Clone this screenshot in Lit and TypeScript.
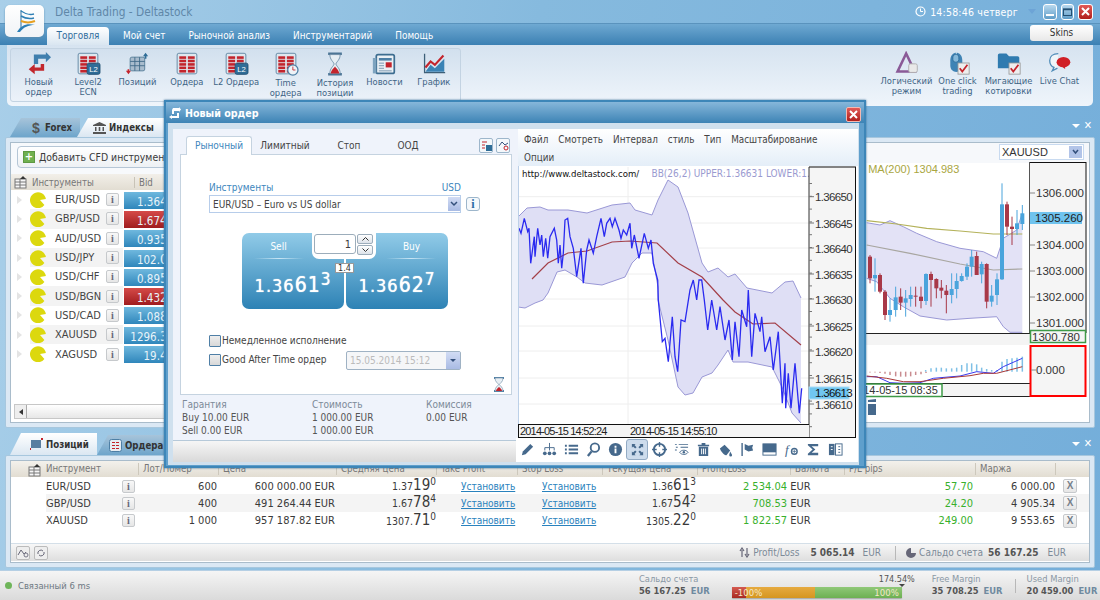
import { LitElement, html, css, svg } from 'lit';
import { customElement } from 'lit/decorators.js';

const z = (s: string, ox: number, oy: number) =>
  s.trim().split(/\s+/).map((p) => {
    const [x, y] = p.split(',').map(Number);
    return `${(ox + x / 3).toFixed(1)},${(oy + y / 3).toFixed(1)}`;
  }).join(' ');

/* dialog chart data */
const upper1 = '518,217 527,208 540,207 548,210 568,210 587,213 612,205 630,203 635,210 652,215 658,200 668,180 678,187 688,213 702,263 708,272 718,268 728,277 735,274 747,288 772,293 785,282 793,281 801,298';
const lower1 = '801,423 792,413 782,387 772,367 748,362 733,362 728,350 718,365 712,373 702,377 693,393 685,395 678,387 668,340 658,300 658,287 652,253 642,253 632,263 625,277 602,285 585,283 577,277 565,270 557,272 548,293 543,300 535,303 525,308 518,307';
const ma1 = '532,279 548,263 568,253 587,251 612,242 630,241 657,243 678,263 702,277 723,300 735,312 753,324 775,323 801,345';
const blue1 = z('12,325 18,340 28,295 38,335 42,325 47,430 58,350 60,410 68,325 75,375 80,345 85,410 92,355 98,415 105,350 118,325 125,360 130,430 135,375 140,445 145,400 150,300 158,295 165,350 175,385 185,470 198,385 205,490 215,390 222,360 235,400 245,350 258,295 268,350 275,310 285,295 292,320 300,295 312,330 318,355 325,330 335,345 345,310 350,385 358,345 372,415 388,340 400,385 408,360 415,430 428,480 430,540 442,665 450,655 460,725 472,590 480,710 488,755 498,600 510,605 525,510 535,480 545,540 552,480 560,480 568,540 578,630 590,540 605,630 615,560 630,660 642,600 652,720 660,605 672,710 680,570 695,620 700,510 710,710 720,580 735,635 740,590 750,695 765,650 775,750 790,635 802,850 810,730 812,865 820,760 828,865 840,730 853,880 860,805', 515, 120);

/* background chart data */
const candles: [number, number, number, number, number, number][] = [
  [30,435,520,440,505,0],[45,445,545,495,505,1],[60,490,550,495,545,0],[75,540,630,545,615,0],[90,565,635,600,615,1],[107,530,620,562,600,1],[122,535,600,560,578,0],[137,540,620,565,578,1],[152,530,590,555,567,1],[167,530,590,557,560,0],[183,530,595,560,573,0],[198,490,585,492,573,1],[213,485,590,492,510,0],[229,505,565,507,535,0],[244,510,565,533,542,0],[259,525,610,542,555,0],[275,490,580,537,555,1],[290,490,565,513,537,1],[305,490,515,498,513,1],[321,460,510,470,500,1],[335,420,500,440,470,1],[350,425,495,438,495,0],[365,455,520,462,493,1],[380,460,595,462,575,0],[395,525,590,557,575,1],[411,490,585,508,555,1],[426,220,510,283,508,1],[441,275,375,283,350,0],[456,320,405,350,357,0],[471,300,375,340,357,1],[487,285,360,310,342,1],
];
const macdBlue: [number, number][] = [[197,5],[213,10],[229,12],[244,12],[259,10],[275,10],[290,12],[305,20],[321,25],[335,25],[350,22],[365,12],[380,8],[395,5],[411,5],[426,30],[441,38],[456,40],[471,42],[487,45]];
const macdRed: [number, number][] = [[30,5],[45,5],[60,8],[75,12],[90,20],[107,28],[122,30],[137,30],[152,28],[167,20],[183,15],[198,8]];
const cx = (v: number) => 860 + v / 3;
const cy = (v: number) => 110 + v / 3;

/* icons */
const redTable = (extra: unknown = '') => html`<svg class="ico" viewBox="0 0 30 28">
  <rect x="3.5" y="1.5" width="23" height="24" rx="2" fill="#dfe7ee" stroke="#57809e"/>
  ${[5, 9, 13, 17, 21].map((y) => svg`<rect x="6" y="${y}" width="8" height="3" fill="#c3242c"/><rect x="16" y="${y}" width="8" height="3" fill="#c3242c"/>`)}
  ${extra}</svg>`;
const l2 = svg`<rect x="14" y="13" width="15" height="13" rx="2" fill="#2f6d97" stroke="#1d4d70"/><text x="21.5" y="23" font-size="9" fill="#fff" text-anchor="middle" font-family="Liberation Sans">L2</text>`;
const clock = svg`<circle cx="23" cy="21" r="6" fill="#eef3f7" stroke="#4d7fa5" stroke-width="1.5"/><path d="M23 17v4h3" stroke="#c3242c" fill="none"/>`;

const ribbonLeft = [
  { i: html`<svg class="ico" viewBox="0 0 30 28"><path d="M9 3h14V0l6 6-6 6V8h-9v6H9z" fill="#3f7fae"/><path d="M21 14v8H10v4L3 20l7-6v4h7v-4z" fill="#c2272d"/></svg>`, l: ['Новый', 'ордер'] },
  { i: redTable(l2), l: ['Level2', 'ECN'] },
  { i: html`<svg class="ico" viewBox="0 0 30 28"><rect x="7" y="6" width="17" height="16" rx="2" fill="#a9bccd" stroke="#4f7895"/><path d="M7 11h17M7 16h17M12.500 6v16M18 6v16" stroke="#3e6886"/><path d="M25 1l3 4h-6z M24 5h2v3h-2z" fill="#2f6d97"/><path d="M5 26l-3-4h6z M4 20h2v3H4z" fill="#c3242c"/></svg>`, l: ['Позиций'] },
  { i: redTable(), l: ['Ордера'] },
  { i: redTable(l2), l: ['L2 Ордера'] },
  { i: redTable(clock), l: ['Time', 'ордера'], low: true },
  { i: html`<svg class="ico" viewBox="0 0 30 28"><path d="M7 2h16M7 26h16" stroke="#4c7595" stroke-width="3"/><path d="M9 3h12c0 6-4 8-5 11 1 3 5 5 5 11H9c0-6 4-8 5-11-1-3-5-5-5-11z" fill="#e6eef4" stroke="#6b8ba5"/><path d="M10 25c1-5 4-6 5-8 1 2 4 3 5 8z" fill="#c3242c"/></svg>`, l: ['История', 'позиции'], low: true },
  { i: html`<svg class="ico" viewBox="0 0 30 28"><rect x="6" y="3" width="21" height="22" rx="2" fill="#eaf0f5" stroke="#3d6d90" stroke-width="2"/><rect x="2" y="7" width="4" height="18" fill="#7da3bf"/><rect x="9" y="7" width="15" height="3" fill="#4d7fa5"/><rect x="17" y="12" width="7" height="6" fill="#c3242c"/><path d="M9 13h6M9 16h6M9 19h6M9 22h15" stroke="#6d8ea7"/></svg>`, l: ['Новости'] },
  { i: html`<svg class="ico" viewBox="0 0 30 28"><path d="M4 2v22h24" stroke="#3d5f78" stroke-width="1.500" fill="none"/><path d="M5 23l6-8 5 4 11-11v15z" fill="#3b83b5"/><path d="M5 18l6-7 5 4 10-11" stroke="#c3242c" stroke-width="2.500" fill="none"/></svg>`, l: ['График'] },
];
const whiteCheck = svg`<rect x="15" y="14" width="13" height="13" fill="#eee" stroke="#999"/><path d="M17 20l3 4 6-8" stroke="#c3242c" stroke-width="2" fill="none"/>`;
const ribbonRight = [
  { i: html`<svg class="ico" viewBox="0 0 30 28"><path d="M14 3L4 24h20z" fill="none" stroke="#8a5a97" stroke-width="3"/><rect x="17" y="15" width="10" height="10" rx="2" fill="#e9e9e9" stroke="#aaa"/></svg>`, l: ['Логический', 'режим'] },
  { i: html`<svg class="ico" viewBox="0 0 30 28"><path d="M6 11c0-12 14-12 14 0v6c0 10-14 10-14 0z" fill="#3f83b5"/><path d="M13 1v9" stroke="#d5e6f2"/><rect x="9" y="4" width="7" height="9" rx="3" fill="#85b8da" stroke="#2c6b99"/>${whiteCheck}</svg>`, l: ['One click', 'trading'] },
  { i: html`<svg class="ico" viewBox="0 0 30 28"><path d="M2 5a2 2 0 012-2h8l3 3h10a2 2 0 012 2v12H2z" fill="#2f7bb0"/>${whiteCheck}</svg>`, l: ['Мигающие', 'котировки'] },
  { i: html`<svg class="ico" viewBox="0 0 30 28"><path d="M13 3c-6 0-10 3-10 8s2 7 5 8l-2 4 6-3" fill="#f0f5f9" stroke="#4f8cb8" stroke-width="1.500"/><ellipse cx="19" cy="13" rx="8" ry="6" fill="#d01f26"/><path d="M17 18l4 3v-3z" fill="#d01f26"/></svg>`, l: ['Live Chat'] },
];

const instruments = [
  ['EUR/USD', '1.36', '41', '1', 0], ['GBP/USD', '1.67', '45', '2', 1], ['AUD/USD', '0.93', '55', '0', 0],
  ['USD/JPY', '102.', '02', '1', 0], ['USD/CHF', '0.89', '55', '3', 0], ['USD/BGN', '1.43', '26', '4', 1],
  ['USD/CAD', '1.08', '83', '1', 0], ['XAUUSD', '1296.', '31', '0', 0], ['XAGUSD', '19.', '41', '0', 0],
];
const positions = [
  ['EUR/USD', '600', '600 000.00 EUR', '1.37', '19', '0', '1.36', '61', '3', '2 534.04', '57.70', '6 000.00'],
  ['GBP/USD', '400', '491 264.44 EUR', '1.67', '78', '4', '1.67', '54', '2', '708.53', '24.20', '4 905.34'],
  ['XAUUSD', '1 000', '957 187.82 EUR', '1307.', '71', '0', '1305.', '22', '0', '1 822.57', '249.00', '9 553.65'],
];
const headers = ['Инструмент', 'Лот/Номер', 'Цена', 'Средняя цена', 'Take Profit', 'Stop Loss', 'Текущая цена', 'Profit/Loss', 'Валюта', 'P/L pips', 'Маржа', ''];

const tools = [
  svg`<path d="M2 14l1-4 8-8 3 3-8 8z"/>`,
  svg`<path d="M8 1v5M3 9V6h10v3M8 6v3" stroke="#46698c" fill="none"/><circle cx="3" cy="12" r="2" /><circle cx="8" cy="12" r="2"/><circle cx="13" cy="12" r="2"/>`,
  svg`<path d="M1 3h2v2H1zM5 3h10v2H5zM1 7h2v2H1zM5 7h10v2H5zM1 11h2v2H1zM5 11h10v2H5z"/>`,
  svg`<circle cx="9.500" cy="6" r="4.500" fill="none" stroke="#46698c" stroke-width="2"/><path d="M6 10l-4 5" stroke="#46698c" stroke-width="2.500"/>`,
  svg`<circle cx="8" cy="8" r="7"/><path d="M7 4h2v2H7zM7 7h2v5H7z" fill="#fff"/>`,
  svg`<path d="M2 2h4L4.800 3.200 7 5.500 5.500 7 3.200 4.800 2 6zM14 2v4l-1.200-1.200L10.500 7 9 5.500l2.200-2.300L10 2zM2 14v-4l1.200 1.200L5.500 9 7 10.500l-2.200 2.300L6 14zM14 14h-4l1.200-1.200L9 10.500 10.500 9l2.300 2.200L14 10z"/>`,
  svg`<circle cx="8" cy="8" r="6" fill="none" stroke="#46698c" stroke-width="2"/><path d="M8 0v5M8 11v5M0 8h5M11 8h5" stroke="#46698c" stroke-width="1.500"/>`,
  svg`<path d="M1 2h2v1H1zM5 2h10v1H5zM2 5h2v1H2zM7 5h8v1H7zM1 8h2v1H1z"/><path d="M6 11c2-3 7-3 9 0-2 3-7 3-9 0z" fill="none" stroke="#46698c"/><circle cx="10.500" cy="11" r="1.300"/>`,
  svg`<path d="M2 3h12v1.500H2zM6 1h4v2H6zM3 5h10v10H3z"/><path d="M6 7v6M8 7v6M10 7v6" stroke="#fff"/>`,
  svg`<path d="M5 1v3M2 7l5-4 6 6-4 5c-2 1-6-4-7-7z"/><path d="M13 10c1 2 2 3 2 4a1.500 1.500 0 01-3 0c0-1 .5-2 1-4z"/>`,
  svg`<path d="M3 1v14H1.500V1zM5 2l4 2 5-1-1 3 1 3-5 1-4-2z"/>`,
  svg`<rect x="1" y="2" width="14" height="12" fill="none" stroke="#46698c"/><rect x="1" y="2" width="14" height="9"/>`,
  svg`<text x="1" y="13" font-size="14" font-style="italic" font-family="Liberation Serif" fill="#46698c">f</text><circle cx="11" cy="10" r="3" fill="none" stroke="#46698c" stroke-width="1.500"/><path d="M9 10h4M11 8v4" stroke="#46698c" stroke-width=".8"/>`,
  svg`<path d="M2 2h11v2.500H6l4 3.500-4 3.500h7V14H2v-1.500L7 8 2 3.500z"/>`,
  svg`<rect x="1" y="2" width="6" height="12"/><rect x="8" y="2" width="7" height="12" fill="#fff" stroke="#46698c"/><path d="M3 5h2M3 8h2" stroke="#fff"/><path d="M11 5h2M11 8h2M11 11h2" stroke="#46698c"/>`,
];

@customElement('app-root')
export class AppRoot extends LitElement {
  static styles = css`
    :host { display: block; width: 1100px; height: 600px; font-family: "DejaVu Sans Condensed", "DejaVu Sans", sans-serif; font-size: 10px; color: #3c3c3c; }
    * { box-sizing: border-box; }
    .app { position: relative; width: 1100px; height: 600px; overflow: hidden; display: flex; flex-direction: column; background: linear-gradient(100deg, #a9cfe9 0%, #86bade 45%, #74aeda 100%); }

    .titlebar { height: 23px; display: flex; align-items: center; padding-left: 55px; padding-right: 7px; font-size: 11.800px; flex: none; position: relative; }
    .apptitle { color: #5f87a8; flex: 1; }
    .logo { position: absolute; left: 5px; top: 5px; width: 39px; height: 32px; background: linear-gradient(#fff, #f0f3f6); border-radius: 5px; box-shadow: 0 1px 2px #5a8db0; z-index: 3; display: flex; align-items: center; justify-content: center; }
    .clock { display: flex; align-items: center; gap: 4px; color: #fff; font-size: 10.500px; margin-right: 10px; letter-spacing: .2px; }
    .tri { width: 0; height: 0; border-left: 4px solid transparent; border-right: 4px solid transparent; border-top: 5px solid #6da4d6; margin-right: 7px; }
    .winbtn { width: 14px; height: 16px; margin-right: 4px; border: 1px solid #fff; border-radius: 3px; background: linear-gradient(#b8d8ee, #5f9dc8); display: flex; align-items: center; justify-content: center; color: #fff; }
    .winbtn.mx { width: 13px; }
    .winbtn.close { width: 15px; margin-right: 0; background: linear-gradient(#e25a56, #b01f1c); }

    .tabband { height: 22px; flex: none; display: flex; align-items: flex-end; padding-left: 47px; padding-right: 7px; background: linear-gradient(#6fa9d2, #3b80b3); border-top: 1px solid #5a93bd; color: #fff; font-size: 9.900px; }
    .tb { padding: 0 0 4px; margin-right: 23px; font-weight: 500; }
    .tb.on { background: linear-gradient(#fff, #d9e6f1); color: #2f6d9c; width: 62px; height: 18px; padding: 3px 0 0; text-align: center; border-radius: 4px 4px 0 0; margin-right: 14px; }
    .skins { margin-left: auto; align-self: flex-start; margin-top: 1px; width: 63px; height: 16px; background: linear-gradient(#fff, #e8e8e8); border-radius: 3px; color: #333; text-align: center; line-height: 16px; }

    .ribbon { margin: 0 7px; height: 61px; flex: none; background: linear-gradient(#d6e3f0, #eff5fb); border-radius: 0 0 5px 5px; display: flex; padding: 3px; color: #3e6485; justify-content: space-between; font-size: 9.300px; }
    .group { width: 451px; height: 54px; border: 1px solid #c3d3e2; border-radius: 3px; display: flex; padding-left: 3px; background: linear-gradient(#d2e0ee, #ecf2f9); }
    .group.right { width: auto; border: none; background: none; padding: 0 5px 0 0; }
    .ri { width: 49.400px; display: flex; flex-direction: column; align-items: center; padding-top: 3px; line-height: 10px; text-align: center; white-space: nowrap; }
    .group.right .ri { width: 51px; }
    .ri .lab { margin-top: 1px; }
    .ri.low .lab { margin-top: 2px; }
    .ico { width: 26px; height: 24px; display: block; }

    .panehead { display: flex; align-items: flex-end; padding-left: 10px; flex: none; position: relative; }
    .top { height: 31px; }
    .bot { height: 22px; margin-top: 5px; }
    .ptab { height: 19px; display: flex; align-items: center; gap: 3px; padding-left: 22px; font-weight: 700; font-size: 9.600px; color: #333; clip-path: polygon(11px 0, 100% 0, 100% 100%, 0 100%); background: linear-gradient(#a7c4da, #6ea5cb); }
    .ptab.on { background: linear-gradient(#fff, #dbe7f2); }
    .forex { width: 70px; }
    .idx { width: 88px; margin-left: -3px; padding-left: 16px; }
    .pos { width: 87px; height: 22px; padding-left: 20px; }
    .ord { width: 80px; height: 20px; padding-left: 12px; }
    .ptab svg { flex: none; }
    .pcorner { position: absolute; right: 8px; bottom: 5px; color: #fff; display: flex; gap: 4px; align-items: center; font-size: 11px; font-weight: 700; }
    .pcorner i { width: 0; height: 0; border-left: 4px solid transparent; border-right: 4px solid transparent; border-top: 4px solid #fff; }

    .pane { margin: 0 5px; flex: none; border: 1px solid #a7c7de; padding: 4px; background: #dbe8f4; border-radius: 2px; }
    .pane.p1 { height: 291px; }
    .pane.p2 { height: 113px; }
    .inner { height: 100%; background: #fff; border: 1px solid #a9bccb; display: flex; flex-direction: column; overflow: hidden; }
    .row1 { flex-direction: row; }
    .lft { width: 510px; flex: none; display: flex; flex-direction: column; }
    .addbar { height: 31px; flex: none; padding: 3px 0 0 6px; background: #f7f9fc; }
    .addbtn { display: inline-flex; align-items: center; gap: 4px; height: 22px; width: 300px; border: 1px solid #b5c6d6; border-radius: 4px; background: linear-gradient(#fff, #eef1f4); padding-left: 5px; font-size: 10.400px; color: #3a3a3a; }
    .plus { width: 12px; height: 12px; background: #6fb04f; border: 1px solid #5d9842; color: #fff; font-weight: 700; line-height: 10px; text-align: center; font-size: 11px; }
    .thead { height: 16px; flex: none; background: linear-gradient(#f2efe9, #e2ddd2); display: flex; align-items: center; color: #777; font-size: 9.600px; }
    .thead .sic { width: 21px; padding-left: 3px; display: flex; }
    .thead .c1 { width: 102px; }
    .thead .sp { border-left: 1px solid #c8c3b7; padding-left: 4px; }
    .list { flex: 1; }
    .irow { height: 19.300px; display: flex; align-items: center; font-size: 11px; color: #444; padding-left: 2px; }
    .arrow { width: 0; height: 0; border-left: 5px solid #e4e4e4; border-top: 4px solid transparent; border-bottom: 4px solid transparent; flex: none; margin: 0 8px 0 4px; }
    .iname { width: 51px; white-space: nowrap; margin-left: 9px; }
    .zebra { display: flex; align-items: center; height: 100%; width: 93px; flex: none; }
    .alt .zebra { background: #f3f3f3; }
    .ib { width: 13px; height: 13px; flex: none; border: 1px solid #c6c9cc; border-radius: 2px; background: linear-gradient(#f8f8f8, #e6e6e6); color: #667; font-family: "Liberation Serif", serif; font-style: normal; font-size: 10px; line-height: 11px; text-align: center; font-weight: 700; display: block; }
    .ib.x { font-family: "Liberation Sans", sans-serif; font-size: 10px; color: #77808a; width: 14px; height: 14px; }
    .bid { height: 18px; width: 61px; margin-left: 1px; flex: none; color: #e8f3f9; background: linear-gradient(#6fb8de, #2f86bb); text-align: right; padding-right: 5px; line-height: 19px; white-space: nowrap; border-top: 1px solid #fff; font-size: 11.500px; }
    .bid.dn { background: linear-gradient(#d54a48, #a01c1e); }
    .bid sup { font-size: 8px; line-height: 0; }
    .big { font-size: 13.500px; }
    .sb { height: 15px; margin: 0 0 3px 3px; flex: none; display: flex; background: linear-gradient(#fff, #e7e7e7); border: 1px solid #c7c7c7; }
    .sb b { width: 12px; border-right: 1px solid #aaa; background: #eee; display: flex; align-items: center; justify-content: center; }
    .sb b::before { content: ""; border-right: 4px solid #333; border-top: 3px solid transparent; border-bottom: 3px solid transparent; }
    .bgchart { display: block; flex: none; }

    .cols { display: grid; grid-template-columns: 35px 76px 16px 79px 118px 101px 81px 83px 96px 91px 83px 103px 82px 35px; }
    .phead { height: 16px; background: linear-gradient(#f3f1ec, #e2ddd2); color: #777; font-size: 9.600px; align-items: center; flex: none; display: grid; grid-template-columns: 35px 92px 80px 118px 100px 81px 85px 95px 93px 54px 131px 80px 35px; }
    .phead span { white-space: nowrap; border-left: 1px solid #cdc8bc; padding-left: 4px; height: 12px; line-height: 12px; }
    .phead span:first-child { border-left: none; padding: 2px 0 0 17px; height: 15px; }
    .phead span:nth-child(2) { border-left: none; padding-left: 0; }
    .prow { height: 17.300px; align-items: center; font-size: 11px; color: #3a3a3a; }
    .prow > * { height: 100%; display: flex; align-items: center; white-space: nowrap; }
    .r { justify-content: flex-end; }
    .prow.alt > *:not(:first-child) { background: #f4f4f4; }
    .pl { color: #38b02c; }
    .prow .lnk { color: #2a82bd; text-decoration: underline; padding-left: 25px; font-size: 10px; }
    .prow .num { display: block; text-align: right; font-size: 10.500px; line-height: 17px; }
    .num b { font-weight: 400; font-size: 15px; }
    .num sup { font-size: 10px; line-height: 0; vertical-align: baseline; position: relative; top: -5px; }
    .pbody { flex: 1; }
    .pfoot { height: 18px; flex: none; margin-bottom: 1px; background: linear-gradient(#f7f7f7, #dedede); border-top: 1px solid #d4dfe8; display: flex; align-items: center; padding: 0 23px 0 5px; color: #7c8a98; font-size: 10px; white-space: nowrap; }
    .mini { width: 14px; height: 14px; border: 1px solid #bbb; background: #eee; border-radius: 2px; margin-right: 4px; display: flex; align-items: center; justify-content: center; flex: none; }
    .fs1 { margin-left: auto; display: flex; align-items: center; }
    .fs1 b { color: #555; font-weight: 700; }
    .m2 { margin-left: 2px; } .m3 { margin-left: 3px; } .m5 { margin-left: 5px; } .m8 { margin-left: 8px; } .m9 { margin-left: 9px; } .m11 { margin-left: 11px; }
    .vs { width: 1px; height: 14px; background: #b8b8b8; margin: 0 10px 0 14px; }

    .status { margin-top: auto; height: 30px; flex: none; background: linear-gradient(#f5f5f5, #dadada); border-top: 1px solid #b5cfe4; display: flex; align-items: center; font-size: 9.300px; color: #8a98a5; white-space: nowrap; position: relative; }
    .dot { width: 7px; height: 7px; border-radius: 50%; background: #6fb55a; margin: 0 6px 0 5px; flex: none; }
    .stat1 { color: #6d7882; flex: none; width: 621px; font-size: 9.400px; }
    .st { display: flex; flex-direction: column; line-height: 12px; margin-top: -2px; flex: none; }
    .st b { color: #555; font-weight: 700; }
    .st em { font-style: normal; color: #6f8a9f; font-weight: 700; margin-left: 5px; }
    .bar { position: relative; display: flex; width: 170px; height: 11px; margin: 14px 0 0 22px; border-radius: 1px; color: #f4e8c8; font-size: 9.500px; line-height: 11px; box-shadow: 0 1px 1px #aaa; flex: none; }
    .bar i { font-style: normal; display: block; }
    .bar .a { width: 14px; background: linear-gradient(#d45a50, #a82a22); padding-left: 3px; white-space: nowrap; position: relative; z-index: 1; }
    .bar .b { width: 69px; background: linear-gradient(#e6aa40, #d59620); }
    .bar .c { flex: 1; background: linear-gradient(#90c878, #6db052); text-align: right; padding-right: 3px; }
    .pct { position: absolute; right: -13px; top: -13px; color: #555; font-size: 9px; }
    .mark { position: absolute; right: -3px; top: -3px; width: 0; height: 0; border-left: 3px solid transparent; border-right: 3px solid transparent; border-top: 3px solid #444; }
    .free { margin-left: 30px; }
    .sep { width: 1px; height: 14px; background: #b8b8b8; margin: 0 11px 0 12px; flex: none; }

    .dlg { position: absolute; left: 164px; top: 100px; width: 702px; height: 368px; background: #5f9fcc; border: 2px solid #3d86b8; display: flex; flex-direction: column; box-shadow: 0 0 2px #3a6f96; z-index: 5; }
    .dtitle { height: 21px; flex: none; background: linear-gradient(#86b7da, #3d83b5); display: flex; align-items: center; padding: 0 3px 0 3px; color: #fff; font-size: 10.600px; font-weight: 700; gap: 4px; }
    .dclose { margin-left: auto; width: 15px; height: 15px; border-radius: 2px; border: 1px solid #f5b8b0; background: linear-gradient(#e25a56, #b01f1c); display: flex; align-items: center; justify-content: center; margin-top: 3px; }
    .dbody { flex: 1; margin: 0 5px 1px 2px; background: #eff3fb; border: solid #cfe0ee; border-width: 6px 1px 3px 5px; display: flex; min-height: 0; }
    .dl { width: 345px; flex: none; display: flex; flex-direction: column; padding: 7px 6px 0 7px; }
    .dtabs { display: flex; height: 18px; font-size: 10px; color: #444; flex: none; position: relative; align-items: center; margin-left: 6px; }
    .dtabs .t { width: 66px; height: 19px; background: #fff; border: 1px solid #c5d3e0; border-bottom: none; color: #3d86bd; text-align: center; line-height: 18px; border-radius: 3px 3px 0 0; position: relative; z-index: 1; flex: none; }
    .dtabs span { text-align: center; flex: none; }
    .dtabs .t1 { width: 66px; } .dtabs .t2 { width: 62px; } .dtabs .t3 { width: 56px; }
    .dtabs .sq { width: 14px; height: 15px; border: 1px solid #9db6cb; border-radius: 2px; background: #f4f8fb; display: flex; align-items: center; justify-content: center; flex: none; margin-left: 3px; }
    .dtabs .sq.first { margin-left: 43px; }
    .dbox { height: 241px; flex: none; background: #fff; border: 1px solid #c5d3e0; display: flex; flex-direction: column; padding: 27px 0 0 28px; position: relative; }
    .flab { display: flex; width: 252px; justify-content: space-between; color: #3d86bd; font-size: 10px; line-height: 12px; }
    .frow { display: flex; align-items: center; margin-top: 1px; }
    .sel { width: 252px; height: 18px; border: 1px solid #b7cdea; display: flex; align-items: center; padding-left: 3px; font-size: 10px; color: #444; }
    .sel .dd { margin-left: auto; width: 12px; height: 14px; background: linear-gradient(#d2dcf4, #a9bbe4); display: flex; align-items: center; justify-content: center; }
    .frow .ib2 { width: 14px; height: 14px; margin-left: 5px; border: 1px solid #9db6cb; border-radius: 3px; background: #f4f8fb; color: #2a6ca5; font-weight: 700; text-align: center; line-height: 12px; font-family: "Liberation Serif", serif; font-size: 12px; }
    .quote { width: 206px; height: 76px; margin: 20px 0 0 33px; display: flex; gap: 2px; position: relative; flex: none; }
    .qb { width: 102px; height: 76px; border-radius: 7px; background: linear-gradient(#91cbe8, #2d82b5); color: #fff; display: flex; flex-direction: column; align-items: center; font-size: 10px; }
    .qh { width: 73px; text-align: center; padding-top: 8px; align-self: flex-start; }
    .qb.b .qh { align-self: flex-end; }
    .qline { width: 50px; height: 1px; background: linear-gradient(90deg, transparent, #c9e6f5, transparent); margin: 6px 0 14px; align-self: flex-start; margin-left: 12px; }
    .qb.b .qline { align-self: flex-end; margin: 6px 12px 14px 0; }
    .qv { font-weight: 400; font-size: 18px; line-height: 24px; white-space: nowrap; letter-spacing: 1px; text-shadow: 0 0 1px #fff; }
    .qv b { font-weight: 400; font-size: 21px; }
    .qv sup { font-size: 17px; line-height: 0; position: relative; top: -2px; vertical-align: 5px; }
    .qty { position: absolute; left: 70px; top: -1px; width: 64px; height: 27px; background: #fff; border-radius: 0 0 7px 7px; padding: 2px; display: flex; gap: 1px; }
    .qin { width: 42px; height: 20px; border: 1px solid #9cadbb; border-radius: 3px; text-align: right; padding-right: 4px; line-height: 19px; font-size: 11px; }
    .qsp { display: flex; flex-direction: column; gap: 1px; width: 16px; }
    .qsp i { height: 10px; border: 1px solid #9cadbb; background: linear-gradient(#fff, #dde3ea); display: flex; align-items: center; justify-content: center; border-radius: 2px; }
    .tag { position: absolute; left: 93px; top: 30px; width: 19px; height: 10px; background: #fff; border: 1px solid #999; font-size: 9px; text-align: center; line-height: 8px; color: #333; }
    .chk { display: flex; align-items: center; gap: 1px; font-size: 10px; color: #444; height: 19px; }
    .chk i { width: 12px; height: 12px; border: 1.500px solid #4f7fa6; background: linear-gradient(#eee, #d8d8d8); border-radius: 1px; flex: none; }
    .chks { margin-top: 22px; position: relative; }
    .dateinp { position: absolute; left: 137px; top: 20px; width: 115px; height: 19px; border: 1px solid #9fb2c4; border-radius: 2px; color: #bbb; display: flex; align-items: center; padding-left: 3px; font-size: 10px; background: #f5f6f8; }
    .dateinp .dd { margin-left: auto; width: 14px; height: 17px; background: linear-gradient(#d2dcf4, #a9bbe4); display: flex; align-items: center; justify-content: center; }
    .hg { position: absolute; right: 6px; bottom: 2px; width: 12px; height: 15px; }
    .dsum { display: grid; grid-template-columns: 130px 114px auto; padding: 3px 0 0 2px; font-size: 10px; line-height: 13px; color: #555; height: 45px; flex: none; }
    .dsum span { display: block; }
    .dsum .h { color: #7c8a98; }
    .dfoot { flex: 1; margin: 0 -6px 0 -7px; background: linear-gradient(#f6f6f6, #d9d9d9); border-top: 1px solid #b6c9d9; }
    .dr { flex: 1; display: flex; flex-direction: column; min-width: 0; background: #fff; }
    .mnu { height: 37px; flex: none; background: linear-gradient(#fff, #e4eef8); display: flex; flex-wrap: wrap; align-content: flex-start; column-gap: 10px; padding: 2px 30px 0 6px; font-size: 9.800px; line-height: 18px; color: #444; }
    .dchart { display: block; flex: none; }
    .tools { flex: 1; display: flex; margin-left: -2px; padding-top: 1px; align-items: flex-start; background: #fff; }
    .tl { width: 22px; height: 21px; display: flex; align-items: center; justify-content: center; fill: #46698c; border: 1px solid transparent; border-radius: 3px; }
    .tl.sel2 { background: #cddcec; border-color: #93abc4; }
    .tl svg { width: 15px; height: 15px; display: block; }
  `;

  private num(a: unknown, b: unknown, c: unknown) {
    return html`<span class="num">${a}<b>${b}</b><sup>${c}</sup></span>`;
  }

  private coin() {
    return html`<svg width="16" height="16" viewBox="0 0 16 16"><path d="M10 8L15.900 7A8 8 0 1 0 14.400 13z" fill="#dcd80e"/></svg>`;
  }

  private mainChart() {
    return svg`<svg class="bgchart" width="570" height="279" viewBox="521 143 570 279" xmlns="http://www.w3.org/2000/svg" font-family="Liberation Sans, sans-serif">
      <rect x="521" y="143" width="570" height="20" fill="#f6f8fb"/>
      <rect x="999.500" y="144.500" width="84" height="15" fill="#fff" stroke="#c8daf0"/>
      <text x="1002" y="156" font-size="11" fill="#333">XAUUSD</text>
      <rect x="1069" y="146" width="13" height="12" fill="#b2c4e8"/><path d="M1073 150l2.500 3 2.500-3" stroke="#34507c" stroke-width="1.500" fill="none"/>
      <text x="859" y="173" font-size="11" fill="#a9a63f">6 MA(200) 1304.983</text>
      <polygon fill="#e3e2f6" points="${z('20,338 60,345 90,332 130,350 170,370 230,395 300,415 370,425 410,445 430,385 470,360 487,310 487,667 450,667 430,650 410,620 330,625 260,630 180,618 130,590 90,565 50,515 20,505', 860, 110)}"/>
      <polyline fill="none" stroke="#9a98d6" points="${z('20,338 60,345 90,332 130,350 170,370 230,395 300,415 370,425 410,445 430,385 470,360 487,310', 860, 110)}"/>
      <polyline fill="none" stroke="#9a98d6" points="${z('20,505 50,515 90,565 130,590 180,618 260,630 330,625 410,620 430,650 450,667 487,667', 860, 110)}"/>
      <polyline fill="none" stroke="#b4b25a" stroke-width="1.200" points="${z('20,332 110,342 200,355 300,363 400,372 487,372', 860, 110)}"/>
      <polyline fill="none" stroke="#a8a6a0" stroke-width="1.200" points="${z('20,405 150,430 300,462 400,480 487,477', 860, 110)}"/>
      ${candles.map(([x, wt, wb, bt, bb, up]) => {
        const c = up ? '#4aa4dc' : '#a83848';
        return svg`<line x1="${cx(x)}" x2="${cx(x)}" y1="${cy(wt)}" y2="${cy(wb)}" stroke="${c}"/><rect x="${cx(x) - 2}" y="${cy(bt)}" width="4" height="${(bb - bt) / 3 || 1}" fill="${c}" />`;
      })}
      <rect x="1030" y="163" width="56" height="170" fill="#f5f5f5"/>
      <line x1="1030" x2="1086" y1="162.500" y2="162.500" stroke="#111"/>
      <line x1="1029.500" x2="1029.500" y1="162" y2="333" stroke="#555"/>
      <line x1="1086" x2="1086" y1="162" y2="333" stroke="#111"/>
      ${[[1306, 193], [1304, 245], [1303, 271], [1302, 297], [1301, 323]].map(([v, y]) => svg`<line x1="1030" x2="1035" y1="${y}" y2="${y}" stroke="#888"/><text x="1036" y="${y + 4}" font-size="11.500" fill="#333">${v}.000</text>`)}
      <line x1="1030" x2="1082" y1="218" y2="218" stroke="#6fc3ee" stroke-width="12"/>
      <text x="1035" y="222" font-size="11.500" fill="#222">1305.260</text>
      <line x1="521" x2="1030" y1="333.500" y2="333.500" stroke="#222"/>
      <rect x="521" y="334" width="509" height="11" fill="#f4f4f4"/>
      <rect x="1030.500" y="330.500" width="55" height="12" fill="#f5f5f5" stroke="#3e9a47" stroke-width="1.500"/>
      <text x="1032" y="340.500" font-size="11.500" fill="#333">1300.780</text>
      ${macdRed.map(([x, h]) => svg`<line x1="${cx(x)}" x2="${cx(x)}" y1="${cy(785)}" y2="${cy(785 + h / 2)}" stroke="#c98c90" stroke-width="1.500"/>`)}
      ${macdBlue.map(([x, h]) => svg`<line x1="${cx(x)}" x2="${cx(x)}" y1="${cy(785)}" y2="${cy(785 - h)}" stroke="#7fc0e6" stroke-width="1.500"/>`)}
      <polyline fill="none" stroke="#3a3af0" points="${z('20,800 50,800 90,818 130,820 180,818 220,805 300,798 350,785 400,790 430,770 487,745', 860, 110)}"/>
      <polyline fill="none" stroke="#a83838" points="${z('20,798 80,805 130,815 180,815 250,805 330,797 370,790 410,790 487,770', 860, 110)}"/>
      <rect x="521" y="384" width="509" height="13" fill="#f4f4f4"/>
      <line x1="521" x2="1030" y1="383.500" y2="383.500" stroke="#222"/>
      <line x1="521" x2="1030" y1="396.500" y2="396.500" stroke="#222"/>
      <rect x="800" y="384" width="142" height="12.500" fill="#fff" stroke="#3e9a47" stroke-width="1.500"/>
      <text x="851" y="394" font-size="11" fill="#333">2014-05-15 08:35</text>
      <rect x="1030.500" y="346" width="55" height="50" fill="#f5f5f5" stroke="#f00" stroke-width="2"/>
      <line x1="1031" x2="1036" y1="370" y2="370" stroke="#888"/>
      <text x="1036" y="374" font-size="11.500" fill="#333">0.000</text>
      <path d="M868 404h8v11h-8z M868 400l8-1v3h-8z" fill="#46698c"/>
    </svg>`;
  }

  private dlgChart() {
    const labels = [['1.36650', 196.7], ['1.36645', 223], ['1.36640', 248], ['1.36635', 274], ['1.36630', 299], ['1.36625', 326], ['1.36620', 351], ['1.36615', 378], ['1.36610', 404]] as [string, number][];
    return svg`<svg class="dchart" width="338" height="272" viewBox="518 166 338 272" xmlns="http://www.w3.org/2000/svg" font-family="Liberation Sans, sans-serif">
      <rect x="518" y="166" width="338" height="272" fill="#fff"/>
      ${labels.map(([, y]) => svg`<line x1="519" x2="809" y1="${y}" y2="${y}" stroke="#eee"/>`)}
      <line x1="628" x2="628" y1="167" y2="424" stroke="#eee"/>
      <polygon fill="#dfdff5" points="${upper1} ${lower1}"/>
      <polyline fill="none" stroke="#9a98d6" points="${upper1}"/>
      <polyline fill="none" stroke="#9a98d6" points="${lower1}"/>
      <polyline fill="none" stroke="#a33f48" stroke-width="1.200" points="${ma1}"/>
      <polyline fill="none" stroke="#2a2af0" stroke-width="1.300" points="${blue1}"/>
      <text x="522" y="177" font-size="9.500" fill="#111" font-family="DejaVu Sans Condensed, DejaVu Sans">http://www.deltastock.com/</text>
      <text x="651.500" y="177" font-size="10" fill="#9a9ad0" font-family="DejaVu Sans Condensed, DejaVu Sans">BB(26,2) UPPER:1.36631 LOWER:1.</text>
      <line x1="518.500" x2="518.500" y1="166" y2="424" stroke="#bcd0e8"/>
      <rect x="809" y="166" width="46" height="271" fill="#f5f5f5"/>
      <line x1="809" x2="856" y1="167" y2="167" stroke="#111"/>
      <line x1="809" x2="809" y1="167" y2="437" stroke="#333"/>
      <line x1="855.500" x2="855.500" y1="167" y2="438" stroke="#111"/>
      ${Array.from({ length: 21 }, (_, i) => svg`<line x1="809" x2="812" y1="${183.500 + i * 12.800}" y2="${183.500 + i * 12.800}" stroke="#777"/>`)}
      ${labels.map(([t, y]) => svg`<line x1="809" x2="814" y1="${y}" y2="${y}" stroke="#777"/><text x="815" y="${y + 4.500}" font-size="11.500" letter-spacing="-.65" fill="#333">${t}</text>`)}
      <rect x="809" y="387" width="40" height="12" fill="#70c6f0" stroke="#a9dcf5"/>
      <text x="815" y="397" font-size="11.500" letter-spacing="-.65" fill="#111">1.36613</text>
      <rect x="518" y="424" width="291" height="13" fill="#f4f4f4"/>
      <line x1="518" x2="809" y1="424.500" y2="424.500" stroke="#111"/>
      <line x1="518" x2="856" y1="437.500" y2="437.500" stroke="#111"/>
      <line x1="518.500" x2="518.500" y1="424" y2="437" stroke="#111"/>
      <text x="520" y="434.500" font-size="11" letter-spacing="-.82" fill="#222">2014-05-15 14:52:24</text>
      <text x="630" y="434.500" font-size="11" letter-spacing="-.82" fill="#222">2014-05-15 14:55:10</text>
    </svg>`;
  }

  render() {
    const dd = html`<svg width="8" height="6" viewBox="0 0 8 6"><path d="M1 1l3 3 3-3" stroke="#34507c" stroke-width="1.500" fill="none"/></svg>`;
    const ddf = html`<svg width="8" height="5" viewBox="0 0 8 5"><path d="M1 1h6L4 4z" fill="#34507c"/></svg>`;
    const tblIcon = html`<svg width="14" height="13" viewBox="0 0 14 13"><rect x="1" y="3" width="11" height="9" fill="#f7f7f7" stroke="#777"/><path d="M1 6h11M1 9h11M6 3v9" stroke="#777"/><path d="M9 0l3 3H6z" fill="#333"/></svg>`;
    const lineIcon = html`<svg width="12" height="10" viewBox="0 0 12 10"><path d="M1 7l3-5 3 4 2-2" stroke="#667" fill="none"/><circle cx="9" cy="7" r="2" fill="none" stroke="#778"/></svg>`;
    return html`<div class="app">
      <div class="logo"><svg width="26" height="26" viewBox="0 0 26 26"><path d="M9 2v20" stroke="#2d6e9f" stroke-width="1" /><path d="M9 3c6 4 9 4 13 3M9 8c5 3 9 3 13 2" stroke="#2d7fb5" stroke-width="1.500" fill="none"/><path d="M9 13c5 2 9 2 14 0" stroke="#e7a021" stroke-width="2" fill="none"/><path d="M5 24c4-7 10-9 18-7-7 0-11 2-15 7z" fill="#2d7fb5"/></svg></div>
      <div class="titlebar">
        <div class="apptitle">Delta Trading - Deltastock</div>
        <div class="clock"><svg width="11" height="11" viewBox="0 0 11 11"><circle cx="5.500" cy="5.500" r="4.500" fill="none" stroke="#fff" stroke-width="1.200"/><path d="M5.500 2.500v3h2.500" stroke="#fff" fill="none"/></svg>14:58:46 четверг</div>
        <i class="tri"></i>
        <div class="winbtn"><svg width="8" height="8" viewBox="0 0 8 8"><path d="M0 7h8" stroke="#fff" stroke-width="2"/></svg></div>
        <div class="winbtn mx"><svg width="9" height="8" viewBox="0 0 9 8"><rect x=".5" y="1" width="8" height="6.500" fill="none" stroke="#234f73"/><path d="M0 1.500h9" stroke="#234f73" stroke-width="1.500"/></svg></div>
        <div class="winbtn close"><svg width="9" height="9" viewBox="0 0 9 9"><path d="M1 1l7 7M8 1l-7 7" stroke="#fff" stroke-width="2"/></svg></div>
      </div>
      <div class="tabband">
        <span class="tb on">Торговля</span><span class="tb">Мой счет</span><span class="tb">Рыночной анализ</span><span class="tb">Инструментарий</span><span class="tb">Помощь</span>
        <span class="skins">Skins</span>
      </div>
      <div class="ribbon">
        <div class="group">
          ${ribbonLeft.map((r) => html`<div class="ri ${r.low ? 'low' : ''}">${r.i}<div class="lab">${r.l.map((t) => html`<div>${t}</div>`)}</div></div>`)}
        </div>
        <div class="group right">
          ${ribbonRight.map((r) => html`<div class="ri">${r.i}<div class="lab">${r.l.map((t) => html`<div>${t}</div>`)}</div></div>`)}
        </div>
      </div>

      <div class="panehead top">
        <div class="ptab forex"><svg width="10" height="14" viewBox="0 0 10 14"><text x="0" y="12" font-size="14" fill="#555" font-weight="700" font-family="Liberation Sans">$</text></svg>Forex</div>
        <div class="ptab on idx"><svg width="13" height="12" viewBox="0 0 13 12"><path d="M6.500 0L13 3v1H0V3zM2 5h1.500v4H2zM5.700 5h1.600v4H5.700zM9.500 5H11v4H9.500zM0 10h13v2H0z" fill="#555"/></svg>Индексы</div>
        <div class="pcorner"><i></i><span>✕</span></div>
      </div>
      <div class="pane p1"><div class="inner row1">
        <div class="lft">
          <div class="addbar"><span class="addbtn"><span class="plus">+</span>Добавить CFD инструмент</span></div>
          <div class="thead"><span class="sic">${tblIcon}</span><span class="c1">Инструменты</span><span class="sp">Bid</span></div>
          <div class="list">
            ${instruments.map((r, i) => html`<div class="irow ${i % 2 ? 'alt' : ''}"><span class="arrow"></span><div class="zebra">${this.coin()}<span class="iname">${r[0]}</span><span class="ib">i</span></div><div class="bid ${r[4] ? 'dn' : ''}">${r[1]}<span class="big">${r[2]}</span><sup>${r[3]}</sup></div></div>`)}
          </div>
          <div class="sb"><b></b></div>
        </div>
        ${this.mainChart()}
      </div></div>

      <div class="panehead bot">
        <div class="ptab on pos"><svg width="13" height="14" viewBox="0 0 13 14"><rect x="1" y="3" width="10" height="8" fill="#5a7ea0"/><path d="M12 1v2M0 13v-2" stroke="#c3242c" stroke-width="2"/></svg>Позиций</div>
        <div class="ptab ord"><svg width="13" height="13" viewBox="0 0 13 13"><rect x=".5" y=".5" width="12" height="12" rx="2" fill="#e6edf3" stroke="#4d7fa5"/><path d="M3 3h3v1H3zM7 3h3v1H7zM3 6h3v1H3zM7 6h3v1H7zM3 9h3v1H3zM7 9h3v1H7z" fill="#c3242c"/></svg>Ордера</div>
        <div class="pcorner"><i></i><span>✕</span></div>
      </div>
      <div class="pane p2"><div class="inner">
        <div class="phead">
          <span>${tblIcon}</span>
          ${headers.map((h) => html`<span>${h}</span>`)}
        </div>
        <div class="pbody">
          ${positions.map((p, i) => html`<div class="cols prow ${i === 1 ? 'alt' : ''}">
            <span></span><span>${p[0]}</span><span><i class="ib">i</i></span>
            <span class="r">${p[1]}</span><span class="r">${p[2]}</span>
            ${this.num(p[3], p[4], p[5])}
            <span class="lnk">Установить</span><span class="lnk">Установить</span>
            ${this.num(p[6], p[7], p[8])}
            <span class="r pl">${p[9]}</span><span>&nbsp;EUR</span>
            <span class="r pl">${p[10]}</span><span class="r">${p[11]}</span>
            <span><i class="ib x m8">X</i></span>
          </div>`)}
        </div>
        <div class="pfoot">
          <i class="mini">${lineIcon}</i><i class="mini"><svg width="10" height="10" viewBox="0 0 10 10"><path d="M2 6a3 3 0 015-3M8 4a3 3 0 01-5 3" fill="none" stroke="#667"/></svg></i>
          <div class="fs1">
            <svg width="12" height="11" viewBox="0 0 12 11"><path d="M3 10V3M1 4l2-3 2 3M8 1v7M6 7l2 3 2-3" stroke="#667" stroke-width="1.200" fill="none"/></svg>
            <span class="m2">Profit/Loss</span><b class="m11">5 065.14</b><span class="m8">EUR</span>
            <i class="vs"></i>
            <svg width="10" height="10" viewBox="0 0 10 10"><path d="M5 0a5 5 0 105 5H5z" fill="#667"/></svg>
            <span class="m3">Сальдо счета</span><b class="m5">56 167.25</b><span class="m9">EUR</span>
          </div>
        </div>
      </div></div>

      <div class="status">
        <i class="dot"></i><span class="stat1">Связанный 6 ms</span>
        <div class="st"><span>Сальдо счета</span><span><b>56 167.25</b><em>EUR</em></span></div>
        <div class="bar"><i class="a">-100%</i><i class="b"></i><i class="c">100%</i><span class="pct">174.54%</span><span class="mark"></span></div>
        <div class="st free"><span>Free Margin</span><span><b>35 708.25</b><em>EUR</em></span></div>
        <i class="sep"></i>
        <div class="st"><span>Used Margin</span><span><b>20 459.00</b><em>EUR</em></span></div>
      </div>

      <div class="dlg">
        <div class="dtitle">
          <svg width="12" height="12" viewBox="0 0 12 12"><path d="M4 1h6V0l2 2.500L10 5V4H5v3H3V3zM8 6v3H3V8L0 10l3 2v-1h7V6z" fill="#fff"/></svg>
          Новый ордер
          <div class="dclose"><svg width="9" height="9" viewBox="0 0 9 9"><path d="M1 1l7 7M8 1l-7 7" stroke="#fff" stroke-width="2"/></svg></div>
        </div>
        <div class="dbody">
          <div class="dl">
            <div class="dtabs">
              <div class="t">Рыночный</div>
              <span class="t1">Лимитный</span><span class="t2">Стоп</span><span class="t3">ООД</span>
              <i class="sq first"><svg width="11" height="11" viewBox="0 0 11 11"><path d="M1 2h5M1 5h3M1 8h3" stroke="#c3242c"/><rect x="5" y="5" width="6" height="6" fill="#2f6d97"/></svg></i>
              <i class="sq"><svg width="11" height="11" viewBox="0 0 11 11"><path d="M1 6l3-4 3 3 3-2" stroke="#34507c" fill="none"/><circle cx="8" cy="8" r="2" fill="none" stroke="#c3242c"/></svg></i>
            </div>
            <div class="dbox">
              <div class="flab"><span>Инструменты</span><span>USD</span></div>
              <div class="frow"><div class="sel">EUR/USD – Euro vs US dollar<span class="dd">${dd}</span></div><div class="ib2">i</div></div>
              <div class="quote">
                <div class="qb"><span class="qh">Sell</span><span class="qline"></span><div class="qv">1.36<b>61</b><sup>3</sup></div></div>
                <div class="qb b"><span class="qh">Buy</span><span class="qline"></span><div class="qv">1.36<b>62</b><sup>7</sup></div></div>
                <div class="qty"><div class="qin">1</div><div class="qsp"><i><svg width="7" height="4" viewBox="0 0 7 4"><path d="M.500 3.500l3-3 3 3" stroke="#333" fill="none"/></svg></i><i><svg width="7" height="4" viewBox="0 0 7 4"><path d="M.500.500l3 3 3-3" stroke="#333" fill="none"/></svg></i></div></div>
                <div class="tag">1.4</div>
              </div>
              <div class="chks">
                <div class="chk"><i></i>Немедленное исполнение</div>
                <div class="chk"><i></i>Good After Time ордер</div>
                <div class="dateinp">15.05.2014 15:12<span class="dd">${ddf}</span></div>
              </div>
              <svg class="hg" viewBox="0 0 12 15"><path d="M1 1h10M1 14h10" stroke="#4d7fa5" stroke-width="2"/><path d="M2 1h8c0 4-3 5-3.500 6.500C7 9 10 10 10 14H2c0-4 3-5 3.500-6.500C5 6 2 5 2 1z" fill="#e8eff4" stroke="#7b97ad" stroke-width=".7"/><path d="M3 14c0-2 2-3 3-4 1 1 3 2 3 4z" fill="#c3242c"/></svg>
            </div>
            <div class="dsum">
              <div><span class="h">Гарантия</span><span>Buy 10.00 EUR</span><span>Sell 0.00 EUR</span></div>
              <div><span class="h">Стоимость</span><span>1 000.00 EUR</span><span>1 000.00 EUR</span></div>
              <div><span class="h">Комиссия</span><span>0.00 EUR</span></div>
            </div>
            <div class="dfoot"></div>
          </div>
          <div class="dr">
            <div class="mnu"><span>Файл</span><span>Смотреть</span><span>Интервал</span><span>стиль</span><span>Тип</span><span>Масштабирование</span><span>Опции</span></div>
            ${this.dlgChart()}
            <div class="tools">${tools.map((t, i) => html`<span class="tl ${i === 5 ? 'sel2' : ''}"><svg viewBox="0 0 16 16">${t}</svg></span>`)}</div>
          </div>
        </div>
      </div>
    </div>`;
  }
}
